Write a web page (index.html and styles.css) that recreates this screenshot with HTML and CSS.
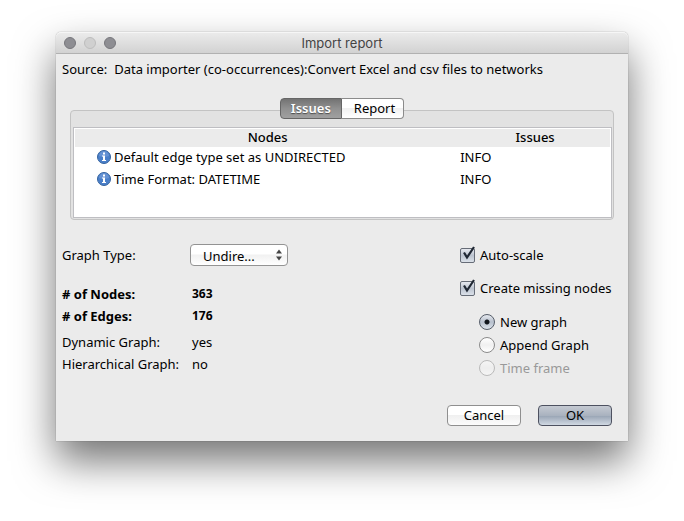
FILE: index.html
```html
<!DOCTYPE html>
<html lang="en">
<head>
<meta charset="utf-8">
<title>Import report</title>
<meta name="viewport" content="width=device-width, initial-scale=1">
<link rel="stylesheet" href="styles.css">
</head>
<body>
<main class="window">
  <header class="titlebar">
    <div class="lights"><span class="light"></span><span class="light light-off"></span><span class="light"></span></div>
    <h1 class="title">Import report</h1>
  </header>

  <p class="source"><span>Source:</span><span>Data importer (co-occurrences):Convert Excel and csv files to networks</span></p>

  <section class="tabs">
    <div class="tablist" role="tablist">
      <button class="tab tab-active" type="button" role="tab" aria-selected="true">Issues</button>
      <button class="tab" type="button" role="tab" aria-selected="false">Report</button>
    </div>
    <div class="panel">
      <div class="table-frame">
        <table class="issues">
          <thead>
            <tr><th class="col-nodes">Nodes</th><th>Issues</th></tr>
          </thead>
          <tbody>
            <tr>
              <td><span class="issue"><svg class="info" viewBox="0 0 14 14" aria-hidden="true"><circle cx="7" cy="7" r="6.5" fill="#4a7fc9" stroke="#34639f"/><path d="M2 6a5 5 0 0 1 10 0q-5 2-10 0z" fill="#7ba3dc" opacity=".55"/><path d="M6 2.500h2v2H6zM5 5.500h3V10h1v1H5v-1h1V6.500H5z" fill="#fff"/></svg>Default edge type set as UNDIRECTED</span></td>
              <td>INFO</td>
            </tr>
            <tr>
              <td><span class="issue"><svg class="info" viewBox="0 0 14 14" aria-hidden="true"><circle cx="7" cy="7" r="6.5" fill="#4a7fc9" stroke="#34639f"/><path d="M2 6a5 5 0 0 1 10 0q-5 2-10 0z" fill="#7ba3dc" opacity=".55"/><path d="M6 2.500h2v2H6zM5 5.500h3V10h1v1H5v-1h1V6.500H5z" fill="#fff"/></svg>Time Format: DATETIME</span></td>
              <td>INFO</td>
            </tr>
          </tbody>
        </table>
      </div>
    </div>
  </section>

  <form class="form">
    <div class="details">
      <div class="type-row">
        <label for="graph-type">Graph Type:</label>
        <span class="select-wrap">
          <select id="graph-type" class="select"><option>Undire...</option></select>
          <svg class="arrows" viewBox="0 0 6 12" aria-hidden="true"><path d="M3 0.500l3 4H0zM3 11.500l3-4H0z" fill="#444"/></svg>
        </span>
      </div>
      <dl class="facts facts-strong">
        <dt># of Nodes:</dt><dd>363</dd>
        <dt># of Edges:</dt><dd>176</dd>
      </dl>
      <dl class="facts">
        <dt>Dynamic Graph:</dt><dd>yes</dd>
        <dt>Hierarchical Graph:</dt><dd>no</dd>
      </dl>
    </div>

    <div class="options">
      <label class="check-row"><span class="check-wrap"><input class="check" type="checkbox" checked><svg class="tick" viewBox="0 0 16 16" aria-hidden="true"><path d="M4 6.500L7 11.500L14 1" fill="none" stroke="#1f2733" stroke-width="2.200"/></svg></span>Auto-scale</label>
      <label class="check-row"><span class="check-wrap"><input class="check" type="checkbox" checked><svg class="tick" viewBox="0 0 16 16" aria-hidden="true"><path d="M4 6.500L7 11.500L14 1" fill="none" stroke="#1f2733" stroke-width="2.200"/></svg></span>Create missing nodes</label>
      <div class="radios" role="radiogroup" aria-label="Target">
        <label class="radio-row"><input class="radio" type="radio" name="target" checked>New graph</label>
        <label class="radio-row"><input class="radio" type="radio" name="target">Append Graph</label>
        <label class="radio-row radio-disabled"><input class="radio" type="radio" name="target" disabled>Time frame</label>
      </div>
    </div>

    <div class="actions">
      <button class="button" type="button">Cancel</button>
      <button class="button button-default" type="submit">OK</button>
    </div>
  </form>
</main>
</body>
</html>
```
FILE: styles.css
```css
* { box-sizing: border-box; }

body {
  margin: 0;
  padding: 32px 56px 80px;
  background: #fff;
  color: #000;
  font: 13px/22px "Noto Sans", "Open Sans", sans-serif;
  overflow: hidden;
}

button, select, input { font: inherit; color: inherit; margin: 0; }

.window {
  background: #ebebeb;
  border-radius: 5px 5px 0 0;
  box-shadow: 0 0 1px rgba(0, 0, 0, .6), 0 20px 40px rgba(0, 0, 0, .55);
}

.titlebar {
  display: grid;
  grid-template-columns: 1fr auto 1fr;
  align-items: center;
  height: 22px;
  padding: 0 8px;
  border-bottom: 1px solid #b1b1b1;
  border-radius: 5px 5px 0 0;
  background: linear-gradient(#ececec, #d2d2d2);
  box-shadow: inset 0 1px #f6f6f6;
}

.lights { display: flex; gap: 8px; }

.light {
  width: 12px;
  height: 12px;
  border: 1px solid #77777c;
  border-radius: 50%;
  background: #8e8e93;
}

.light-off { border-color: #bdbdbd; background: #d0d0d0; }

.title {
  margin: 0;
  color: #444;
  font: 13px/20px Inter, sans-serif;
}

.source {
  display: flex;
  gap: 7px;
  margin: 0;
  padding: 4px 6px 18px;
}

.tabs { padding: 0 14px; }

.tablist {
  position: relative;
  display: flex;
  justify-content: center;
  margin-bottom: -9px;
}

.tab {
  height: 21px;
  padding: 0 8px 0 12px;
  border: 1px solid #8b8b8b;
  border-left: 0;
  border-radius: 0 4px 4px 0;
  background: linear-gradient(#fff, #fff 45%, #f1f1f1 50%, #fff);
  line-height: 17px;
}

.tab-active {
  padding: 0 10px;
  border: 1px solid #666;
  border-radius: 4px 0 0 4px;
  background: linear-gradient(#737373, #909090 50%, #a0a0a0);
  color: #fff;
  font-weight: 600;
  text-shadow: 0 1px 1px rgba(0, 0, 0, .5);
}

.panel {
  padding: 16px 1px 1px 2px;
  border: 1px solid #c3c3c3;
  border-radius: 4px;
  background: #e2e2e2;
}

.table-frame {
  min-height: 91px;
  padding: 1px;
  border: 1px solid #bebec2;
  background: #fff;
}

.issues { width: 100%; border-collapse: collapse; table-layout: fixed; }

.issues th {
  height: 18px;
  padding: 0 0 2px;
  background: #ebebeb;
  font-weight: 500;
  line-height: 16px;
}

.col-nodes { width: 72%; }

.issues td { height: 22px; padding: 0 0 2px; line-height: 20px; }

.issue { display: flex; align-items: center; gap: 3px; padding-left: 22px; }

.info { width: 14px; height: 14px; }

.form {
  display: grid;
  grid-template-columns: 1fr 162px;
  padding: 22px 6px 15px;
}

.type-row {
  display: grid;
  grid-template-columns: 128px 98px;
  align-items: center;
  margin: 2px 0 17px;
}

.select-wrap { position: relative; display: flex; }

.select {
  appearance: none;
  width: 100%;
  height: 22px;
  padding: 0 20px 1px 12px;
  border: 1px solid #939393;
  border-radius: 4px;
  background: linear-gradient(#fff, #fff 45%, #f1f1f1 50%, #fff);
}

.arrows { position: absolute; top: 5px; right: 6px; width: 6px; height: 12px; pointer-events: none; }

.facts {
  display: grid;
  grid-template-columns: 130px 1fr;
  margin: 0 0 4px;
}

.facts dd { margin: 0; }

.facts-strong { font-weight: 700; }

.facts-strong dd { font-size: 12px; }

.options { padding-top: 2px; }

.check-row, .radio-row { display: flex; align-items: center; }

.check-row { gap: 4px; margin-bottom: 11px; }

.check-wrap { position: relative; display: flex; width: 16px; }

.check {
  appearance: none;
  width: 15px;
  height: 15px;
  border: 1px solid #666c77;
  border-radius: 2px;
  background: linear-gradient(#e6e9ef, #bcc4d0 50%, #dbe1e9);
}

.tick { position: absolute; top: -2px; left: 0; width: 16px; height: 16px; pointer-events: none; }

.radios { padding-left: 19px; }

.radio-row { height: 23px; gap: 5px; }

.radio {
  appearance: none;
  width: 16px;
  height: 16px;
  border: 1px solid #8a8a8a;
  border-radius: 50%;
  background: linear-gradient(#fff, #f0f0f0 50%, #fff);
}

.radio:checked {
  border-color: #565d69;
  background: radial-gradient(circle, #10151c 2px, transparent 3px), linear-gradient(#e6e9ef, #b7c0cd 50%, #dbe2ea);
}

.radio-disabled { color: #999; }

.radio-disabled .radio { opacity: .5; }

.actions {
  grid-column: 1 / -1;
  display: flex;
  justify-content: flex-end;
  gap: 17px;
  padding: 26px 10px 0 0;
}

.button {
  width: 74px;
  height: 21px;
  padding: 0;
  border: 1px solid #8f8f8f;
  border-radius: 4px;
  background: linear-gradient(#fff, #fff 45%, #f0f0f0 50%, #fcfcfc);
  line-height: 17px;
}

.button-default {
  border-color: #4d5160;
  background: linear-gradient(#c5cad2, #a9b2bf 50%, #99a5b5 52%, #d0d8e2);
}
```
